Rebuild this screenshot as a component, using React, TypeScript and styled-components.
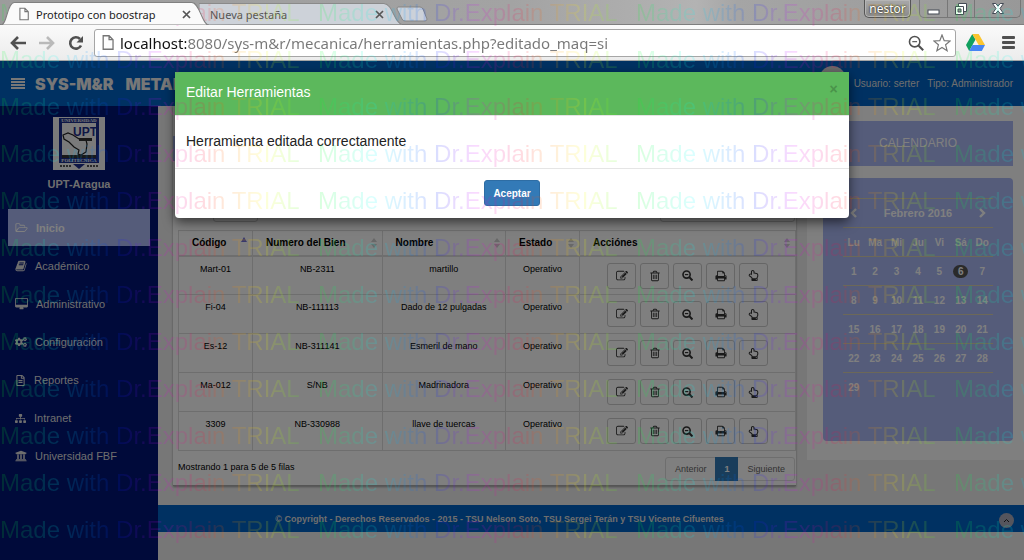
import React from "react";
import styled, { createGlobalStyle } from "styled-components";
import { FaCogs, FaSitemap, FaUniversity, FaRegFileAlt, FaRegHandPointUp } from "react-icons/fa";

const sans = `"Liberation Sans", Arial, sans-serif`;
const chromeFont = `"Noto Sans", "Open Sans", sans-serif`;

const GlobalStyle = createGlobalStyle`
  *, *::before, *::after { box-sizing: border-box; }
  body { margin: 0; font-family: ${sans}; font-size: 10px; background: #eee; }
  button, input, select { font: inherit; margin: 0; }
  button { padding: 0; border: 0; background: none; color: inherit; }
  a { color: inherit; text-decoration: none; }
  h1, h2, h3, p, ul { margin: 0; padding: 0; font-size: inherit; }
`;

/* ---------- icons ---------- */

const Glyph = styled.svg<{ $w: number; $h?: number }>`
  display: block;
  flex: none;
  width: ${(p) => p.$w}px;
  height: ${(p) => p.$h ?? p.$w}px;
  fill: currentColor;
`;

const paths = {
  folder:
    "M1845 931q0-23-34-23h-1088q-26 0-56 13.5t-46 33.500l-294 363q-14 17-14 29 0 22 34 22h1088q26 0 56.500-14t46.500-34l294-363q14-17 14-27zm-1122-151h768v-160q0-40-28-68t-68-28h-576q-40 0-68-28t-28-68v-64q0-40-28-68t-68-28h-320q-40 0-68 28t-28 68v853l256-315q44-53 116-87.500t140-34.500zm1250 151q0 62-46 120l-295 363q-43 53-116 87.500t-140 34.500h-1088q-92 0-158-66t-66-158v-960q0-92 66-158t158-66h320q92 0 158 66t66 158v32h544q92 0 158 66t66 158v160h192q54 0 99 24.500t67 70.500q15 32 15 68z",
  book:
    "M1703 478q40 57 18 129l-275 906q-19 64-76.500 107.500t-122.500 43.500h-923q-77 0-148.500-53.500t-99.500-131.500q-24-67-2-127 0-4 3-27t4-37q1-8-3-21.500t-3-19.500q2-11 8-21t16.500-23.500 16.500-23.500q23-38 45-91.500t30-91.500q3-10 .5-30t-.5-28q3-11 17-28t17-23q21-36 42-92t25-90q1-9-2.500-32t.5-28q4-13 22-30.500t22-22.500q19-26 42.500-84.500t27.500-96.500q1-8-3-25.500t-2-26.500q2-8 9-18t18-23 17-21q8-12 16.500-30.500t15-35 16-36 19.500-32 26.500-23.500 36-11.500 47.500 5.500l-1 3q38-9 51-9h761q74 0 114 56t18 130l-274 906q-36 119-71.500 153.500t-128.500 34.500h-869q-27 0-38 15-11 16-1 43 24 70 144 70h923q29 0 56-15.500t35-41.500l300-987q7-22 5-57 38 15 59 43zm-1064 2q-4 13 2 22.500t20 9.500h608q13 0 25.500-9.500t16.500-22.500l21-64q4-13-2-22.500t-20-9.500h-608q-13 0-25.500 9.500t-16.500 22.500zm-83 256q-4 13 2 22.500t20 9.500h608q13 0 25.500-9.500t16.500-22.500l21-64q4-13-2-22.500t-20-9.500h-608q-13 0-25.500 9.500t-16.500 22.500z",
  desktop:
    "M1728 992v-832q0-13-9.500-22.500t-22.500-9.500h-1600q-13 0-22.500 9.500t-9.500 22.500v832q0 13 9.500 22.500t22.500 9.500h1600q13 0 22.500-9.500t9.500-22.500zm128-832v1088q0 66-47 113t-113 47h-544q0 37 16 77.500t32 71 16 43.500q0 26-19 45t-45 19h-512q-26 0-45-19t-19-45q0-14 16-44t32-70 16-78h-544q-66 0-113-47t-47-113v-1088q0-66 47-113t113-47h1600q66 0 113 47t47 113z",
  edit:
    "M888 1184l116-116-152-152-116 116v56h96v96h56zm440-720q-16-16-33 1l-350 350q-17 17-1 33t33-1l350-350q17-17 1-33zm80 594v190q0 119-84.500 203.500t-203.500 84.500h-832q-119 0-203.500-84.500t-84.500-203.500v-832q0-119 84.500-203.500t203.500-84.500h832q63 0 117 25 15 7 18 23 3 17-9 29l-49 49q-14 14-32 8-23-6-45-6h-832q-66 0-113 47t-47 113v832q0 66 47 113t113 47h832q66 0 113-47t47-113v-126q0-13 9-22l64-64q15-15 35-7t20 29zm-96-738l288 288-672 672h-288v-288zm444 132l-92 92-288-288 92-92q28-28 68-28t68 28l152 152q28 28 28 68t-28 68z",
  trash:
    "M704 736v576q0 14-9 23t-23 9h-64q-14 0-23-9t-9-23v-576q0-14 9-23t23-9h64q14 0 23 9t9 23zm256 0v576q0 14-9 23t-23 9h-64q-14 0-23-9t-9-23v-576q0-14 9-23t23-9h64q14 0 23 9t9 23zm256 0v576q0 14-9 23t-23 9h-64q-14 0-23-9t-9-23v-576q0-14 9-23t23-9h64q14 0 23 9t9 23zm128 724v-948h-896v948q0 22 7 40.500t14.500 27 10.500 8.500h832q3 0 10.500-8.500t14.500-27 7-40.500zm-672-1076h448l-48-117q-7-9-17-11h-317q-10 2-17 11zm928 32v64q0 14-9 23t-23 9h-96v948q0 83-47 143.500t-113 60.500h-832q-66 0-113-58.500t-47-141.500v-952h-96q-14 0-23-9t-9-23v-64q0-14 9-23t23-9h309l70-167q15-37 54-63t79-26h320q40 0 79 26t54 63l70 167h309q14 0 23 9t9 23z",
  print:
    "M448 1536h896v-256h-896v256zm0-640h896v-384h-160q-40 0-68-28t-28-68v-160h-640v640zm1152 64q0-26-19-45t-45-19-45 19-19 45 19 45 45 19 45-19 19-45zm128 0v416q0 13-9.500 22.500t-22.500 9.500h-224v160q0 40-28 68t-68 28h-960q-40 0-68-28t-28-68v-160h-224q-13 0-22.500-9.500t-9.500-22.500v-416q0-79 56.500-135.500t135.500-56.500h64v-544q0-40 28-68t68-28h672q40 0 88 20t76 48l152 152q28 28 48 76t20 88v256h64q79 0 135.500 56.500t56.500 135.500z",
};

const FolderIcon = () => <Glyph $w={13} $h={12} viewBox="0 0 2048 1792"><path d={paths.folder} /></Glyph>;
const BookIcon = () => <Glyph $w={12} viewBox="0 0 1792 1792"><path d={paths.book} /></Glyph>;
const DesktopIcon = () => <Glyph $w={13} $h={12} viewBox="-64 0 1920 1792"><path d={paths.desktop} /></Glyph>;
const EditIcon = () => <Glyph $w={12} viewBox="0 0 1792 1792"><path d={paths.edit} /></Glyph>;
const TrashIcon = () => <Glyph $w={12} viewBox="0 0 1792 1792"><path d={paths.trash} /></Glyph>;
const PrintIcon = () => <Glyph $w={12} viewBox="0 0 1792 1792"><path d={paths.print} /></Glyph>;
const ZoomOutIcon = ({ size = 11, weight = 1.8 }: { size?: number; weight?: number }) => (
  <Glyph $w={size} viewBox="0 0 12 12">
    <g fill="none" stroke="currentColor">
      <circle cx="5" cy="5" r="3.9" strokeWidth={weight} />
      <path d="M8 8l3.400 3.400" strokeWidth={weight + 0.4} />
      <path d="M3.200 5h3.600" strokeWidth={weight * 0.7} />
    </g>
  </Glyph>
);
const BarsIcon = () => (
  <Glyph $w={14} $h={11} viewBox="0 0 14 11">
    <path d="M0 0h14v2H0zM0 3h14v2H0zM0 6h14v2H0zM0 9h14v2H0z" />
  </Glyph>
);
const MenuIcon = () => (
  <Glyph $w={13} $h={13} viewBox="0 0 13 13">
    <rect width="13" height="3" rx="1" /><rect y="5" width="13" height="3" rx="1" /><rect y="10" width="13" height="3" rx="1" />
  </Glyph>
);
const PageIcon = ({ w, h }: { w: number; h: number }) => (
  <Glyph $w={w} $h={h} viewBox="0 0 11 14">
    <path d="M1 .7h5.500L10.200 4.400v8.900H1z M6.500.7v3.700h3.700" fill="#fdfdfd" stroke="#757575" strokeWidth="1.200" />
  </Glyph>
);

/* ---------- browser frame ---------- */

const Screen = styled.div`
  position: relative;
  display: flex;
  flex-direction: column;
  min-height: 100vh;
  overflow: hidden;
`;

const TabStrip = styled.div`
  display: flex;
  align-items: flex-end;
  height: 25px;
  padding-left: 1px;
  background: linear-gradient(90deg, #9c9c9c, #a3a3a3 50%, #b3b3b3 68%, #a5a5a5 72%, #989898);
  border-bottom: 1px solid #7e7e7e;
  font-family: ${chromeFont};
  font-size: 11px;
`;

const Tab = styled.div<{ $active?: boolean }>`
  position: relative;
  z-index: ${(p) => (p.$active ? 1 : 0)};
  display: flex;
  align-items: center;
  gap: 7px;
  width: ${(p) => (p.$active ? 208 : 203)}px;
  height: 24px;
  margin-right: -10px;
  margin-bottom: -1px;
  padding: 2px 18px 0 ${(p) => (p.$active ? 18 : 11)}px;
  color: ${(p) => (p.$active ? "#222" : "#555")};
  > span { flex: 1; white-space: nowrap; }
`;

const TabShape = styled.svg`
  position: absolute;
  inset: 0;
  z-index: -1;
  width: 100%;
  height: 100%;
`;

const TabClose = styled.button`
  display: grid;
  place-items: center;
  width: 10px;
  height: 12px;
`;

const NewTab = styled.button`
  width: 32px;
  height: 20px;
  margin-left: 4px;
`;

const WindowControls = styled.div`
  display: flex;
  gap: 8px;
  align-self: flex-start;
  margin-left: auto;
  padding-right: 3px;
`;

const UserButton = styled.button`
  height: 18px;
  width: 47px;
  border: 1px solid #555;
  border-top: 0;
  border-radius: 0 0 5px 5px;
  background: linear-gradient(#a9a9a9, #8a8a8a);
  box-shadow: inset 0 0 0 1px #b5b5b5;
  color: #fff;
  font-size: 12px;
  text-shadow: 0 0 2px #222, 0 0 2px #444;
  line-height: 16px;
`;

const WindowGroup = styled.div`
  display: flex;
  height: 18px;
  border: 1px solid #777;
  border-top: 0;
  border-radius: 0 0 5px 5px;
`;

const WindowButton = styled.button<{ $wide?: boolean }>`
  display: grid;
  place-items: center;
  width: ${(p) => (p.$wide ? 46 : 27)}px;
  & + & { border-left: 1px solid #777; }
`;

const Toolbar = styled.div`
  display: flex;
  align-items: center;
  height: 36px;
  padding: 0 6px 0 10px;
  background: linear-gradient(#fafafa, #ececec);
  border-bottom: 1px solid #a5a5a5;
  color: #505050;
`;

const NavButton = styled.button<{ $faded?: boolean }>`
  width: 16px;
  height: 16px;
  margin-right: 13px;
  opacity: ${(p) => (p.$faded ? 0.35 : 1)};
`;

const AddressBar = styled.div`
  display: flex;
  flex: 1;
  align-items: center;
  gap: 6px;
  height: 28px;
  margin: 0 9px 0 -3px;
  padding: 0 3px 0 7px;
  border: 1px solid #a6a6a6;
  border-radius: 3px;
  background: #fff;
`;

const AddressInput = styled.input`
  flex: 1;
  min-width: 0;
  height: 26px;
  padding: 0;
  border: 0;
  outline: 0;
  font-family: ${chromeFont};
  font-size: 15px;
  color: #777;
  background: linear-gradient(90deg, #111 66px, #777 66px);
  background-clip: text;
  -webkit-text-fill-color: transparent;
`;

const ToolButton = styled.button`
  display: grid;
  place-items: center;
  width: 20px;
  height: 20px;
`;

const Extras = styled.div`
  display: flex;
  gap: 13px;
`;

/* ---------- application ---------- */

const Page = styled.div`
  position: relative;
  display: flex;
  flex: 1;
  flex-direction: column;
`;

const AppHeader = styled.header`
  display: flex;
  align-items: center;
  height: 45px;
  padding: 0 11px;
  background: #0062c4;
  color: #eee;
`;

const Brand = styled.h1`
  display: flex;
  gap: 12px;
  margin-left: 10px;
  font-family: Inter, ${sans};
  font-size: 16px;
  font-weight: 900;
`;

const UserInfo = styled.div`
  display: flex;
  align-items: center;
  gap: 8px;
  margin-left: auto;
  color: #ddd;
`;

const Avatar = styled.span`
  width: 27px;
  height: 27px;
  margin: -8px 0 0;
  border-radius: 50%;
  background: #d8d8d8;
`;

const Body = styled.div`
  display: flex;
  flex: 1;
`;

const Sidebar = styled.nav`
  display: flex;
  flex: 0 0 158px;
  flex-direction: column;
  align-items: center;
  padding: 11px 8px;
  background: #001474;
  color: #ddd;
`;

const SchoolName = styled.p`
  margin: 7px 0 18px;
  font-size: 11px;
  line-height: 14px;
  font-weight: bold;
`;

const Menu = styled.ul`
  width: 100%;
  list-style: none;
`;

const MenuLink = styled.a<{ $active?: boolean }>`
  display: flex;
  align-items: center;
  gap: 8px;
  height: ${(p) => (p.$active ? 37 : 38)}px;
  margin-bottom: ${(p) => (p.$active ? 1 : 0)}px;
  padding-left: 7px;
  background: ${(p) => (p.$active ? "#aab8f4" : "transparent")};
  color: ${(p) => (p.$active ? "#fff" : "inherit")};
  font-size: 11px;
  font-weight: ${(p) => (p.$active ? "bold" : "normal")};
`;

const Main = styled.main`
  display: flex;
  flex: 1;
  flex-direction: column;
  min-width: 0;
`;

const Columns = styled.div`
  display: flex;
  align-items: flex-start;
  gap: 11px;
  padding: 0 0 19px 15px;
`;

const Card = styled.section`
  flex: 1;
  min-width: 0;
  padding: 30px 0 4px 5px;
  background: #fff;
  border-bottom: 1px solid #aaa;
  box-shadow: 0 1px 2px #999;
  font-size: 9px;
`;

const CardBar = styled.div`
  height: 25px;
  margin-left: -5px;
  background: #aab8f4;
`;

const TableTools = styled.div`
  display: flex;
  justify-content: space-between;
  margin: 38px 1px 8px 35px;
`;

const LengthSelect = styled.select`
  width: 45px;
  height: 23px;
  border: 1px solid #ccc;
  border-radius: 3px;
  background: #fff;
`;

const SearchInput = styled.input`
  width: 135px;
  height: 23px;
  border: 1px solid #ccc;
  border-radius: 3px;
`;

const DataTable = styled.table`
  width: 100%;
  border-collapse: collapse;
  table-layout: fixed;
  color: #000;
  th, td { border: 1px solid #ddd; }
  th { height: 25px; padding: 0 5px 0 13px; border-bottom-width: 2px; text-align: left; font-size: 10px; }
  td { height: 39px; padding: 5px 8px 0; text-align: center; vertical-align: top; line-height: 14px; }
`;

const HeadCell = styled.div`
  display: flex;
  align-items: center;
  justify-content: space-between;
`;

const ActionRow = styled.div`
  display: flex;
  justify-content: center;
  gap: 4px;
  padding: 1px 0 0;
`;

const ActionButton = styled.button`
  display: grid;
  place-items: center;
  width: 29px;
  height: 26px;
  border: 1px solid #ccc;
  border-radius: 3px;
  background: #fff;
  color: #333;
`;

const TableFooter = styled.div`
  display: flex;
  justify-content: space-between;
  padding-top: 6px;
`;

const Summary = styled.p`
  line-height: 20px;
`;

const Pager = styled.div`
  display: flex;
  height: 24px;
  margin-right: 1px;
  border: 1px solid #ddd;
  border-radius: 3px;
  color: #666;
`;

const PageButton = styled.button<{ $current?: boolean }>`
  padding: 0 9px;
  ${(p) => p.$current && "background: #337ab7; color: #fff; font-weight: bold; margin: -1px 0;"}
`;

const SidePanel = styled.aside`
  display: flex;
  flex: 0 0 217px;
  flex-direction: column;
  gap: 12px;
  padding: 15px 11px 19px 16px;
  background: #fff;
  color: #fff;
`;

const PanelTitle = styled.h2`
  background: #aab8f4;
  line-height: 45px;
  text-align: center;
  font-size: 12px;
  font-weight: normal;
`;

const Calendar = styled.div`
  height: 263px;
  padding: 20px;
  border-radius: 4px;
  background: #aab8f4;
`;

const MonthTable = styled.table`
  width: 100%;
  border-collapse: collapse;
  table-layout: fixed;
  tr { border-top: 1px solid #d8d0b0; }
  th, td { height: 29px; padding: 0; text-align: center; font-weight: bold; }
  button { display: block; margin: auto; }
`;

const Today = styled.span`
  display: block;
  width: 15px;
  margin: auto;
  border-radius: 7px;
  background: #555;
  line-height: 13px;
`;

const MonthName = styled.th`
  font-size: 11px;
`;

const Footer = styled.footer`
  display: flex;
  align-items: center;
  height: 27px;
  padding-right: 10px;
  background: #0062c4;
  color: #ddd;
  font-size: 9px;
  font-weight: bold;
  p { flex: 0 1 683px; text-align: center; }
`;

const TopButton = styled.button`
  display: grid;
  place-items: center;
  width: 15px;
  height: 15px;
  margin: 4px 0 0 auto;
  border-radius: 50%;
  background: #aab;
  color: #222;
`;

/* ---------- dialog ---------- */

const Backdrop = styled.div`
  position: absolute;
  inset: 0;
  background: rgba(0, 0, 0, 0.5);
`;

const Dialog = styled.div`
  width: calc(100% - 40px);
  max-width: 674px;
  margin: 11px auto;
  border-radius: 4px;
  background: #fff;
  box-shadow: 0 4px 12px rgba(0, 0, 0, 0.6);
  color: #222;
  font-size: 14px;
`;

const DialogHeader = styled.div`
  display: flex;
  align-items: center;
  justify-content: space-between;
  height: 44px;
  padding: 0 11px;
  border-bottom: 1px solid #e5e5e5;
  background: #5cb85c;
  color: #fff;
  h2 { font-size: 14px; font-weight: normal; line-height: 20px; margin-top: -3px; }
`;

const CloseButton = styled.button`
  width: 9px;
  margin-top: -9px;
  color: #4a934a;
  font-weight: bold;
  line-height: 14px;
`;

const DialogBody = styled.p`
  padding: 15px 11px 16px;
  line-height: 21px;
`;

const DialogFooter = styled.div`
  padding: 11px 0 12px;
  border-top: 1px solid #e5e5e5;
  text-align: center;
`;

const AcceptButton = styled.button`
  display: inline-block;
  width: 56px;
  height: 26px;
  border: 1px solid #2e6da4;
  border-radius: 3px;
  background: #337ab7;
  color: #fff;
  font-size: 10px;
  font-weight: bold;
  vertical-align: top;
`;

/* ---------- watermark ---------- */

const Watermark = styled.div`
  position: absolute;
  inset: 0;
  overflow: hidden;
  pointer-events: none;
  opacity: 0.14;
  font-size: 24px;
  line-height: 47px;
  margin-top: -11px;
`;

const WatermarkRow = styled.div`
  display: flex;
`;

const WatermarkText = styled.span`
  flex: 0 0 318px;
  white-space: nowrap;
  background: linear-gradient(90deg, #00ff20, #00ffff 18%, #0020ff 37%, #e000ff 50%, #ff0040 63%, #ff6000 70%, #ffff00 83%, #00ff20);
  background-clip: text;
  -webkit-text-fill-color: transparent;
`;

/* ---------- data ---------- */

const menu = [
  { label: "Inicio", icon: <FolderIcon />, active: true },
  { label: "Académico", icon: <BookIcon /> },
  { label: "Administrativo", icon: <DesktopIcon /> },
  { label: "Configuración", icon: <FaCogs size={12} /> },
  { label: "Reportes", icon: <FaRegFileAlt size={11} /> },
  { label: "Intranet", icon: <FaSitemap size={11} /> },
  { label: "Universidad FBF", icon: <FaUniversity size={12} /> },
];

const columns = [
  { name: "Código", width: "12%" },
  { name: "Numero del Bien", width: "21%" },
  { name: "Nombre", width: "20%" },
  { name: "Estado", width: "12%" },
  { name: "Acciónes", width: "35%" },
];

const tools = [
  ["Mart-01", "NB-2311", "martillo"],
  ["Fi-04", "NB-111113", "Dado de 12 pulgadas"],
  ["Es-12", "NB-311141", "Esmeril de mano"],
  ["Ma-012", "S/NB", "Madrinadora"],
  ["3309", "NB-330988", "llave de tuercas"],
];

const actions = [
  { label: "Editar", icon: <EditIcon /> },
  { label: "Eliminar", icon: <TrashIcon /> },
  { label: "Ver", icon: <ZoomOutIcon /> },
  { label: "Imprimir", icon: <PrintIcon /> },
  { label: "Seleccionar", icon: <FaRegHandPointUp size={11} /> },
];

const weekdays = ["Lu", "Ma", "Mi", "Ju", "Vi", "Sá", "Do"];
const weeks = [0, 1, 2, 3, 4].map((w) => weekdays.map((_, d) => w * 7 + d + 1));

const CrossMark = () => (
  <Glyph $w={9} viewBox="0 0 9 9"><path d="M1 1l7 7M8 1l-7 7" stroke="#555" strokeWidth="1.700" /></Glyph>
);

const SortMark = ({ sorted }: { sorted?: boolean }) => (
  <Glyph $w={6} $h={12} viewBox="0 0 6 12">
    {sorted ? <path d="M0 5L3 0l3 5z" fill="#7070d8" /> : <path d="M0 5l3-4 3 4zM0 7l3 4 3-4z" fill="#d0d0d0" />}
  </Glyph>
);

const Logo = () => (
  <Glyph $w={52} $h={53} viewBox="0 0 52 53" role="img" aria-label="UPT Aragua">
    <rect width="52" height="53" fill="#f4f4f4" />
    <path d="M6 1h40v45H6z" fill="#1c2f8c" />
    <path d="M9 6h34v32H9z" fill="#f4f4f4" />
    <path d="M10 18l5-2 5 2 6 4 7 1 1 4-1 8-5 3-3-1 1-4-5-3-5-5-5-3z" fill="none" stroke="#222" strokeWidth="1.200" />
    <path d="M20 47h12l-6 5z" fill="#1c2f8c" />
    <g fill="#f4f4f4" fontFamily="Liberation Serif, serif" fontWeight="bold" textAnchor="middle">
      <text x="26" y="5" fontSize="5">UNIVERSIDAD</text>
      <text x="26" y="45" fontSize="5">POLITECNICA</text>
      <text x="32" y="19" fontSize="12" fontFamily="Liberation Sans, sans-serif" fill="#1c2f8c">UPT</text>
    </g>
    <path d="M26 21h13v3H26zM9 38h34v3H9z" fill="#333" />
    <path d="M7 49h12M34 49h12" stroke="#555" strokeWidth="2" strokeDasharray="2 1" />
  </Glyph>
);

const Chevron = ({ flip }: { flip?: boolean }) => (
  <Glyph $w={8} $h={10} viewBox="0 0 8 10">
    <path d={flip ? "M2 1l4 4-4 4" : "M6 1L2 5l4 4"} fill="none" stroke="currentColor" strokeWidth="2.400" />
  </Glyph>
);

function BrowserFrame() {
  return (
    <>
      <TabStrip>
        <Tab $active>
          <TabShape viewBox="0 0 206 24" preserveAspectRatio="none">
            <path d="M0 24C6 24 6 2 13 1.500H189C197 2 199 24 206 24z" fill="#fafafa" stroke="#808080" />
          </TabShape>
          <PageIcon w={10} h={14} />
          <span>Prototipo con boostrap</span>
          <TabClose aria-label="Cerrar pestaña"><CrossMark /></TabClose>
        </Tab>
        <Tab>
          <TabShape viewBox="0 0 202 24" preserveAspectRatio="none">
            <path d="M0 24V2.500H184C193 3 194 22 202 23.500z" fill="#cdd2d9" stroke="#8a8a8a" />
          </TabShape>
          <span>Nueva pestaña</span>
          <TabClose aria-label="Cerrar pestaña"><CrossMark /></TabClose>
        </Tab>
        <NewTab aria-label="Nueva pestaña">
          <Glyph $w={32} $h={16} viewBox="0 0 32 16">
            <path d="M2 1h22q2 0 3 2l4 10q0 2-2 2H9q-2 0-3-2L1 3q0-2 1-2z" fill="#ccd1d9" stroke="#858585" />
          </Glyph>
        </NewTab>
        <WindowControls>
          <UserButton>nestor</UserButton>
          <WindowGroup>
            <WindowButton aria-label="Minimizar">
              <Glyph $w={13} $h={12} viewBox="0 0 13 12"><rect x="1" y="7" width="11" height="4" fill="#fff" stroke="#444a55" /></Glyph>
            </WindowButton>
            <WindowButton aria-label="Restaurar">
              <Glyph $w={12} viewBox="0 0 12 12">
                <path d="M3.500.5h8v8h-8z" fill="#fff" stroke="#444a55" />
                <path d="M.5 3.500h8v8h-8z" fill="#fff" stroke="#444a55" />
                <path d="M3 6h3v3H3z" fill="#999" stroke="#444a55" />
              </Glyph>
            </WindowButton>
            <WindowButton $wide aria-label="Cerrar">
              <Glyph $w={12} $h={11} viewBox="0 0 12 11">
                <path d="M.5.5h3.300L6 3.200 8.200.5h3.300L8 5.500l3.500 5H8.200L6 7.800 3.800 10.500H.5L4 5.500z" fill="#fff" stroke="#444a55" />
              </Glyph>
            </WindowButton>
          </WindowGroup>
        </WindowControls>
      </TabStrip>
      <Toolbar>
        <NavButton aria-label="Atrás">
          <Glyph $w={16} viewBox="0 0 16 16"><path d="M8 2L2 8l6 6M2 8h14" fill="none" stroke="currentColor" strokeWidth="2.600" /></Glyph>
        </NavButton>
        <NavButton $faded aria-label="Adelante">
          <Glyph $w={16} viewBox="0 0 16 16"><path d="M8 2l6 6-6 6M14 8H0" fill="none" stroke="currentColor" strokeWidth="2.600" /></Glyph>
        </NavButton>
        <NavButton aria-label="Recargar">
          <Glyph $w={16} viewBox="0 0 16 16">
            <path d="M13 10.500A5.700 5.700 0 1 1 12 4" fill="none" stroke="currentColor" strokeWidth="2.600" />
            <path d="M15 1v6.500H8.500z" />
          </Glyph>
        </NavButton>
        <AddressBar>
          <PageIcon w={12} h={15} />
          <AddressInput aria-label="Dirección" defaultValue="localhost:8080/sys-m&r/mecanica/herramientas.php?editado_maq=si" />
          <ToolButton aria-label="Zoom"><ZoomOutIcon size={16} weight={1.2} /></ToolButton>
          <ToolButton aria-label="Favorito">
            <Glyph $w={18} viewBox="0 0 18 18">
              <path d="M9 1l2.200 5.600 6 .4-4.600 3.800 1.500 5.900L9 13.400l-5.100 3.300 1.500-5.900L.8 7l6-.4z" fill="#fff" stroke="#777" strokeWidth="1.200" />
            </Glyph>
          </ToolButton>
        </AddressBar>
        <Extras>
          <ToolButton aria-label="Google Drive">
            <Glyph $w={19} $h={17} viewBox="0 0 19 17">
              <path d="M6.300 0L0 11l3.200 6L9.500 5.600z" fill="#11a05f" />
              <path d="M6.300 0h6.400L19 11h-6.300z" fill="#fbc52f" />
              <path d="M6.500 11H19l-3.200 6H3.200z" fill="#4585f3" />
            </Glyph>
          </ToolButton>
          <ToolButton aria-label="Menú"><MenuIcon /></ToolButton>
        </Extras>
      </Toolbar>
    </>
  );
}

function ToolsCard() {
  return (
    <Card>
      <CardBar />
      <TableTools>
        <LengthSelect aria-label="Filas por página"><option>10</option></LengthSelect>
        <SearchInput aria-label="Buscar" />
      </TableTools>
      <DataTable>
        <colgroup>{columns.map((c) => <col key={c.name} style={{ width: c.width }} />)}</colgroup>
        <thead>
          <tr>
            {columns.map((c, i) => (
              <th key={c.name}><HeadCell>{c.name}<SortMark sorted={i === 0} /></HeadCell></th>
            ))}
          </tr>
        </thead>
        <tbody>
          {tools.map((row) => (
            <tr key={row[0]}>
              {row.map((cell) => <td key={cell}>{cell}</td>)}
              <td>Operativo</td>
              <td>
                <ActionRow>
                  {actions.map((a) => <ActionButton key={a.label} aria-label={a.label}>{a.icon}</ActionButton>)}
                </ActionRow>
              </td>
            </tr>
          ))}
        </tbody>
      </DataTable>
      <TableFooter>
        <Summary>Mostrando 1 para 5 de 5 filas</Summary>
        <Pager>
          <PageButton>Anterior</PageButton>
          <PageButton $current>1</PageButton>
          <PageButton>Siguiente</PageButton>
        </Pager>
      </TableFooter>
    </Card>
  );
}

function CalendarPanel() {
  return (
    <SidePanel>
      <PanelTitle>CALENDARIO</PanelTitle>
      <Calendar>
        <MonthTable>
          <thead>
            <tr>
              <th><button aria-label="Mes anterior"><Chevron /></button></th>
              <MonthName colSpan={5}>Febrero 2016</MonthName>
              <th><button aria-label="Mes siguiente"><Chevron flip /></button></th>
            </tr>
            <tr>{weekdays.map((d) => <th key={d}>{d}</th>)}</tr>
          </thead>
          <tbody>
            {weeks.map((week) => (
              <tr key={week[0]}>
                {week.map((day) => <td key={day}>{day === 6 ? <Today>{day}</Today> : day <= 29 && day}</td>)}
              </tr>
            ))}
          </tbody>
        </MonthTable>
      </Calendar>
    </SidePanel>
  );
}

export default function App() {
  return (
    <Screen>
      <GlobalStyle />
      <BrowserFrame />
      <Page>
        <AppHeader>
          <button aria-label="Menú"><BarsIcon /></button>
          <Brand><span>SYS-M&amp;R</span><span>METALMECANICA</span></Brand>
          <UserInfo>
            <Avatar />
            <span>Usuario: serter</span>
            <span>Tipo: Administrador</span>
          </UserInfo>
        </AppHeader>
        <Body>
          <Sidebar>
            <Logo />
            <SchoolName>UPT-Aragua</SchoolName>
            <Menu>
              {menu.map((m) => (
                <li key={m.label}><MenuLink href="#" $active={m.active}>{m.icon}{m.label}</MenuLink></li>
              ))}
            </Menu>
          </Sidebar>
          <Main>
            <Columns>
              <ToolsCard />
              <CalendarPanel />
            </Columns>
            <Footer>
              <p>© Copyright - Derechos Reservados - 2015 - TSU Nelson Soto, TSU Sergei Terán y TSU Vicente Cifuentes</p>
              <TopButton aria-label="Subir">
                <Glyph $w={7} $h={5} viewBox="0 0 7 5"><path d="M1 4l2.500-2.500L6 4" fill="none" stroke="currentColor" /></Glyph>
              </TopButton>
            </Footer>
          </Main>
        </Body>
        <Backdrop>
          <Dialog role="dialog" aria-modal="true" aria-labelledby="dialog-title">
            <DialogHeader>
              <h2 id="dialog-title">Editar Herramientas</h2>
              <CloseButton aria-label="Cerrar">×</CloseButton>
            </DialogHeader>
            <DialogBody>Herramienta editada correctamente</DialogBody>
            <DialogFooter><AcceptButton>Aceptar</AcceptButton></DialogFooter>
          </Dialog>
        </Backdrop>
      </Page>
      <Watermark aria-hidden="true">
        {Array.from({ length: 12 }, (_, row) => (
          <WatermarkRow key={row}>
            {Array.from({ length: 4 }, (_, col) => <WatermarkText key={col}>Made with Dr.Explain TRIAL</WatermarkText>)}
          </WatermarkRow>
        ))}
      </Watermark>
    </Screen>
  );
}
